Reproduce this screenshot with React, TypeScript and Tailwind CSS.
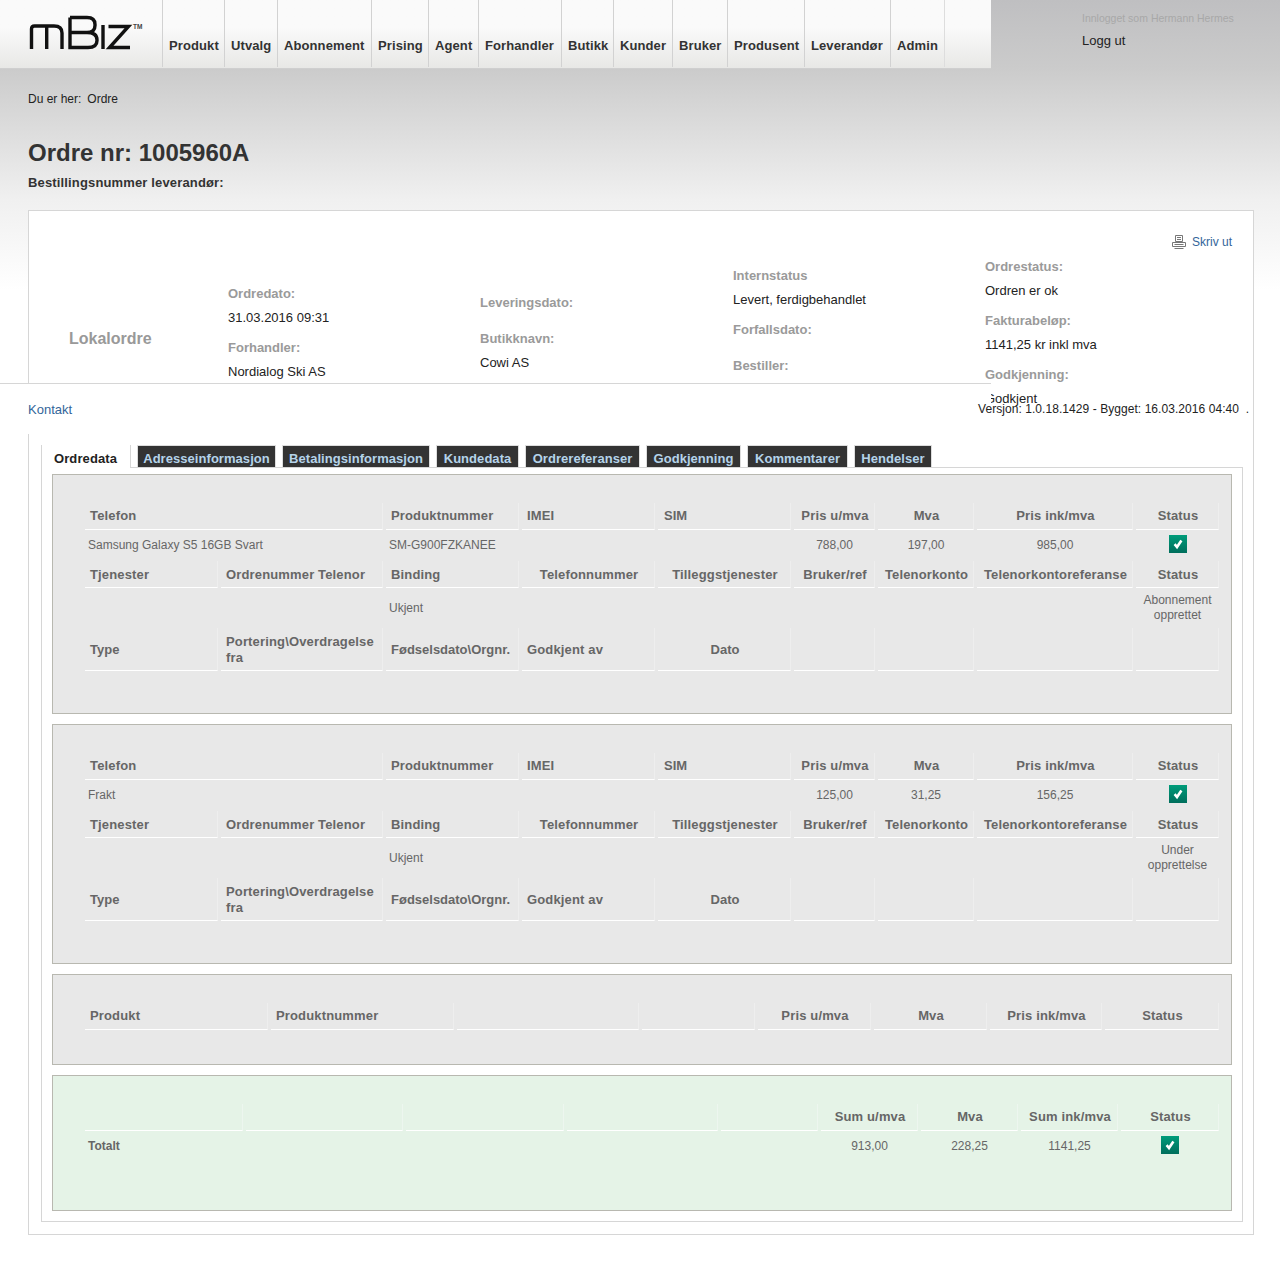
import React from 'react';

const navItems = [
  { label: 'Produkt', width: 'w-[62px]' },
  { label: 'Utvalg', width: 'w-[53px]' },
  { label: 'Abonnement', width: 'w-[94px]' },
  { label: 'Prising', width: 'w-[57px]' },
  { label: 'Agent', width: 'w-[50px]' },
  { label: 'Forhandler', width: 'w-[83px]' },
  { label: 'Butikk', width: 'w-[52px]' },
  { label: 'Kunder', width: 'w-[59px]' },
  { label: 'Bruker', width: 'w-[55px]' },
  { label: 'Produsent', width: 'w-[77px]' },
  { label: 'Leverandør', width: 'w-[86px]' },
  { label: 'Admin', width: 'w-[54px]' },
];

const tabs = [
  { label: 'Adresseinformasjon', width: 'w-[139px]' },
  { label: 'Betalingsinformasjon', width: 'w-[148px]' },
  { label: 'Kundedata', width: 'w-[83px]' },
  { label: 'Ordrereferanser', width: 'w-[115px]' },
  { label: 'Godkjenning', width: 'w-[95px]' },
  { label: 'Kommentarer', width: 'w-[101px]' },
  { label: 'Hendelser', width: 'w-[78px]' },
];

const Logo = () => (
  <svg width="162" height="68" viewBox="0 0 162 68" className="block">
    <g fill="none" stroke="#111" strokeWidth="3.4">
      <path d="M31.5 49V29Q31.5 26 34.5 26H54Q62 26 62 33V49M46.7 26V49" />
      <path d="M70 17.5H87Q95 17.5 95 24.5V25.5Q95 32.5 87 32.5H70M87 32.5Q97 32.5 97 40V40.5Q97 47.5 88 47.5H70V17.5" />
      <path d="M103 25V49" />
      <path d="M108.5 26.5H128.5L109.5 47.5H130" strokeLinejoin="miter" />
    </g>
    <text x="133" y="28.5" fontSize="6.5" fontWeight="700" fill="#444" fontFamily="'Liberation Sans', sans-serif">TM</text>
  </svg>
);

const Check = () => (
  <span className="mb-[4px] inline-flex h-[18px] w-[18px] items-center justify-center bg-gradient-to-b from-[#009c7a] to-[#006e5c]">
    <svg width="12" height="12" viewBox="0 0 12 12">
      <path d="M2.6 6.2 5 9 9.4 2.6" fill="none" stroke="#fff" strokeWidth="2.6" />
    </svg>
  </span>
);

const PrinterIcon = () => (
  <svg width="14" height="14" viewBox="0 0 14 14" className="block">
    <path d="M3.5 .5h7v6h-7zM5 2.5h4M5 4.5h4M.5 7.5h13v4h-13zM2.5 9.5h9M2.5 13.5h9" fill="none" stroke="#777" strokeWidth="1" />
  </svg>
);

const Head = ({ children, center, span, green }: { children?: React.ReactNode; center?: boolean; span?: string; green?: boolean }) => (
  <div className={`flex items-center border-r border-b border-b-white font-bold leading-4 text-[#666] ${green ? 'border-r-[#edf6ef]' : 'border-r-[#eeeeee]'} ${center ? 'justify-center pl-[7px] pr-[5px] text-center' : 'px-[5px]'} ${span ?? 'tracking-[0.15px]'}`}>
    <span>{children}</span>
  </div>
);

const Data = ({ children, center, span }: { children?: React.ReactNode; center?: boolean; span?: string }) => (
  <div className={`flex items-center px-[3px] text-xs leading-[15px] text-[#666] ${center ? 'justify-center text-center' : ''} ${span ?? ''}`}>
    {children}
  </div>
);

const Field = ({ label, value }: { label: string; value?: string }) => (
  <div>
    <div className="h-6 font-bold leading-6 text-[#9a9a9a]">{label}</div>
    {value ? <div className="mb-[6px] h-6 leading-6 text-[#222]">{value}</div> : <div className="h-3" />}
  </div>
);

const ProductPanel = ({ name, number, pris, mva, ink, status }: { name: string; number?: string; pris: string; mva: string; ink: string; status: string }) => (
  <div className="mb-[10px] h-[240px] border border-[#b8b8b0] bg-[#e8e8e8] pl-[32px] pt-[28px]">
    <div className="grid grid-cols-[133px_162px_133px_133px_133px_81px_96px_156px_83px] grid-rows-[27px_27px_27px_36px_43px] gap-x-[3px] gap-y-[2px]">
      <Head span="col-span-2 tracking-[0.15px]">Telefon</Head>
      <Head>Produktnummer</Head>
      <Head>IMEI</Head>
      <Head span="!pl-[6px]">SIM</Head>
      <Head center>Pris u/mva</Head>
      <Head center>Mva</Head>
      <Head center>Pris ink/mva</Head>
      <Head center>Status</Head>

      <Data span="col-span-2">{name}</Data>
      <Data>{number}</Data>
      <Data />
      <Data />
      <Data center>{pris}</Data>
      <Data center>{mva}</Data>
      <Data center>{ink}</Data>
      <Data center><Check /></Data>

      <Head span="pt-[2px] tracking-[0.15px]">Tjenester</Head>
      <Head span="pt-[2px] tracking-[0.15px]">Ordrenummer Telenor</Head>
      <Head span="pt-[2px] tracking-[0.15px]">Binding</Head>
      <Head center span="pt-[2px] tracking-[0.15px]">Telefonnummer</Head>
      <Head center span="pt-[2px] tracking-[0.15px]">Tilleggstjenester</Head>
      <Head center span="pt-[2px] tracking-[0.15px]">Bruker/ref</Head>
      <Head center span="pt-[2px] tracking-[0.15px]">Telenorkonto</Head>
      <Head center span="pt-[2px] tracking-[0.15px]">Telenorkontoreferanse</Head>
      <Head center span="pt-[2px] tracking-[0.15px]">Status</Head>

      <Data />
      <Data />
      <Data>Ukjent</Data>
      <Data />
      <Data />
      <Data />
      <Data />
      <Data />
      <Data center>{status}</Data>

      <Head span="pt-[2px]">Type</Head>
      <Head span="pt-[2px] tracking-[0.15px]">Portering\Overdragelse fra</Head>
      <Head span="pt-[2px]">Fødselsdato\Orgnr.</Head>
      <Head span="pt-[2px] tracking-[0.15px]">Godkjent av</Head>
      <Head center span="pt-[2px]">Dato</Head>
      <Head />
      <Head />
      <Head />
      <Head />
    </div>
  </div>
);

const App: React.FC = () => (
  <div className="relative min-h-[1283px] bg-white bg-[linear-gradient(#bfbfc1,#cbcbcb_68px,#f0f0f0_200px,#ffffff_290px)] bg-[length:100%_300px] bg-no-repeat font-['Liberation_Sans',Arial,sans-serif] text-[13px] text-[#333]">
    <header className="flex">
      <div className="flex h-[69px] w-[991px] border-b border-b-[#cfcfcf] bg-gradient-to-b from-[#fafafa] from-40% to-[#e8e8e6]">
        <div className="w-[162px] shrink-0"><Logo /></div>
        {navItems.map((item) => (
          <div key={item.label} className={`flex h-[67px] items-center border-l border-l-[#d2d2d2] pl-[6px] pt-[24px] font-bold tracking-[0.1px] text-[#333] ${item.width}`}>{item.label}</div>
        ))}
        <div className="h-[67px] border-l border-l-[#dddddd]" />
      </div>
      <div className="ml-[91px] pt-[12px]">
        <div className="text-[10.5px] leading-[13px] text-[#a8a8a8]">Innlogget som Hermann Hermes</div>
        <div className="mt-[8px] leading-[15px] text-[#222]">Logg ut</div>
      </div>
    </header>

    <div className="pl-[28px] pr-[26px]">
      <div className="pt-[23px] text-xs leading-[15px] text-[#222]">
        <span>Du er her:</span>
        <span className="ml-[6px]">Ordre</span>
      </div>
      <h1 className="mt-[31px] text-2xl font-bold leading-[30px] text-[#333]">Ordre nr: 1005960A</h1>
      <div className="mt-[7px] font-bold leading-4 tracking-[0.15px] text-[#333]">Bestillingsnummer leverandør:</div>

      <section className="mt-[19px] border border-[#d6d6d6] bg-white pb-[12px] pt-[21px]">
        <div className="flex h-5 items-center justify-end gap-[6px] pr-[21px] text-xs text-[#33659a]">
          <PrinterIcon />
          <span>Skriv ut</span>
        </div>
        <div className="mt-[3px] flex items-center pl-[40px]">
          <div className="w-[159px] pt-[6px] text-base font-bold text-[#999]">Lokalordre</div>
          <div className="w-[252px]">
            <Field label="Ordredato:" value="31.03.2016 09:31" />
            <Field label="Forhandler:" value="Nordialog Ski AS" />
          </div>
          <div className="w-[253px]">
            <Field label="Leveringsdato:" />
            <Field label="Butikknavn:" value="Cowi AS" />
          </div>
          <div className="w-[252px] pb-[18px]">
            <Field label="Internstatus" value="Levert, ferdigbehandlet" />
            <Field label="Forfallsdato:" />
            <Field label="Bestiller:" />
          </div>
          <div>
            <Field label="Ordrestatus:" value="Ordren er ok" />
            <Field label="Fakturabeløp:" value="1141,25 kr inkl mva" />
            <Field label="Godkjenning:" value="Godkjent" />
          </div>
        </div>

        <div className="ml-[12px] mr-[10px] mt-[28px]">
          <div className="flex h-[22px]">
            <div className="h-[23px] w-[90px] border-l border-r border-[#d6d6d6] bg-white pl-[12px] font-bold leading-[27px] tracking-[0.1px] text-[#222]">Ordredata</div>
            <div className="ml-[6px] flex gap-[6px]">
              {tabs.map((tab) => (
                <div key={tab.label} className={`border border-[#dddddd] border-b-0 bg-[#333333] text-center font-bold leading-[25px] tracking-[0.05px] text-[#b5d3ea] ${tab.width}`}>{tab.label}</div>
              ))}
            </div>
          </div>
          <div className="border border-[#d6d6d6] px-[10px] pt-[6px]">
            <ProductPanel name="Samsung Galaxy S5 16GB Svart" number="SM-G900FZKANEE" pris="788,00" mva="197,00" ink="985,00" status="Abonnement opprettet" />
            <ProductPanel name="Frakt" pris="125,00" mva="31,25" ink="156,25" status="Under opprettelse" />

            <div className="mb-[10px] h-[91px] border border-[#b8b8b0] bg-[#e8e8e8] pl-[32px] pt-[28px]">
              <div className="grid h-[27px] grid-cols-[183px_183px_182px_113px_113px_113px_112px_114px] gap-x-[3px]">
                <Head>Produkt</Head>
                <Head>Produktnummer</Head>
                <Head />
                <Head />
                <Head center>Pris u/mva</Head>
                <Head center>Mva</Head>
                <Head center>Pris ink/mva</Head>
                <Head center>Status</Head>
              </div>
            </div>

            <div className="mb-[10px] h-[136px] border border-[#b8b8b0] bg-[#e5f3e7] pl-[32px] pt-[28px]">
              <div className="grid grid-cols-[158px_157px_158px_151px_97px_97px_97px_97px_98px] grid-rows-[27px_27px] gap-x-[3px] gap-y-[2px]">
                <Head green />
                <Head green />
                <Head green />
                <Head green />
                <Head green />
                <Head green center>Sum u/mva</Head>
                <Head green center>Mva</Head>
                <Head green center>Sum ink/mva</Head>
                <Head green center>Status</Head>
                <Data span="col-span-5 font-bold">Totalt</Data>
                <Data center>913,00</Data>
                <Data center>228,25</Data>
                <Data center>1141,25</Data>
                <Data center><Check /></Data>
              </div>
            </div>
          </div>
        </div>
      </section>
    </div>

    <footer className="absolute left-0 top-[383px] h-[51px] w-[991px] border-t border-t-[#d6d6d6] bg-white">
      <a className="absolute left-[28px] top-[18px] leading-[15px] text-[#33659a]">Kontakt</a>
      <span className="absolute left-[978px] top-[18px] whitespace-nowrap text-xs leading-[15px] tracking-[0.06px] text-[#222]">Versjon: 1.0.18.1429 - Bygget: 16.03.2016 04:40 &nbsp;.</span>
    </footer>
  </div>
);

export default App;
